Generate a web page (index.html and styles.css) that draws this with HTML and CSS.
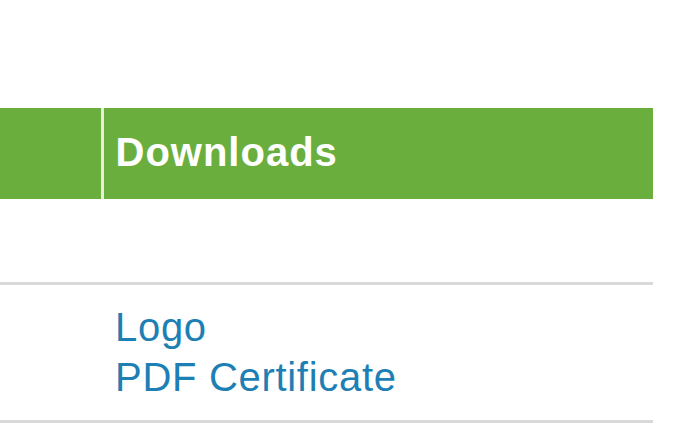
FILE: index.html
```html
<html>
<head>
	<link rel="stylesheet" href="styles.css">
</head>
<body>
  <div class="page">
    <table class="files">
      <tr class="head">
        <th class="first"></th>
        <th class="dl">Downloads</th>
      </tr>
      <tr class="blank">
        <td class="first"></td>
        <td></td>
      </tr>
      <tr class="item">
        <td class="first"></td>
        <td class="links">
          <a href="#">Logo</a><br>
          <a href="#">PDF Certificate</a>
        </td>
      </tr>
    </table>
  </div>
</body>
</html>
```

FILE: styles.css
```css
body {
  margin: 0;
  background: #fff;
  font-family: "Liberation Sans", Arial, sans-serif;
}

.page {
  padding-top: 108px;
}

.files {
  border-collapse: collapse;
  width: 653px;
}

.files th,
.files td {
  padding: 0;
  text-align: left;
  vertical-align: top;
}

.first {
  width: 102px;
}

.head th {
  background: #6aaf3e;
  color: #fff;
  font-size: 40px;
  font-weight: bold;
  letter-spacing: 1px;
  height: 91px;
  box-sizing: border-box;
}

.head .dl {
  border-left: 3px solid #e4eedb;
  padding: 22px 0 0 12px;
}

.blank td {
  height: 84px;
  border-bottom: 3px solid #d9d9d9;
}

.item td {
  border-bottom: 3px solid #d9d9d9;
}

.links {
  font-size: 40px;
  line-height: 50px;
  letter-spacing: 0.7px;
  padding: 17px 0 18px 13px !important;
}

.links a {
  color: #1d7fb4;
  text-decoration: none;
}
```
